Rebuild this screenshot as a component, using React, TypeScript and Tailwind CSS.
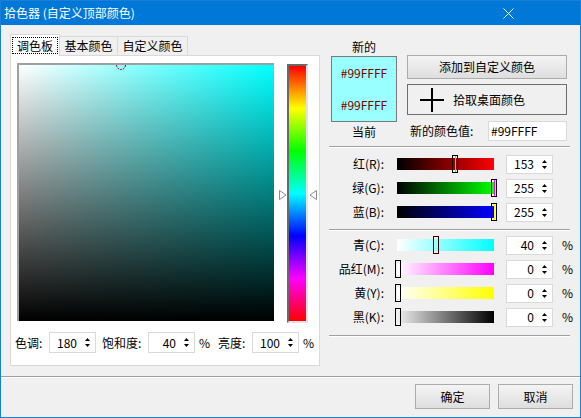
import React from "react";

const SpinArrows = () => (
  <svg width="5" height="9" viewBox="0 0 5 9" className="shrink-0">
    <path d="M2.5 0 L5 3 L0 3 Z" fill="#000" />
    <path d="M0 6 L5 6 L2.5 9 Z" fill="#000" />
  </svg>
);

function Spin({ value, className }: { value: string; className: string }) {
  return (
    <div className={"flex items-center justify-end bg-white border border-[#d9d9d9] pr-[5px] shrink-0 " + className}>
      <span className="mr-[8px] leading-none">{value}</span>
      <SpinArrows />
    </div>
  );
}

function Slider({
  track,
  pos,
  line,
  dark,
}: {
  track: string;
  pos: number;
  line?: string;
  dark?: boolean;
}) {
  return (
    <div className={"relative w-[97px] h-[12px] ml-[13px] shrink-0 " + track}>
      <div
        className={"absolute -top-[3px] h-[18px] w-[6px] border flex justify-center " + (dark ? "border-[#3a0000]" : "border-black")}
        style={{ left: Math.round(pos * 97) - 3 + (pos === 0 ? 1 : 0) }}
      >
        {line ? <div className={"w-[1px] h-full " + line} /> : null}
      </div>
    </div>
  );
}

function Row({
  label,
  track,
  pos,
  value,
  line,
  pct,
  dark,
}: {
  label: string;
  track: string;
  pos: number;
  value: string;
  line?: string;
  pct?: boolean;
  dark?: boolean;
}) {
  return (
    <div className="flex items-center h-[24px]">
      <div className="w-[59px] text-right shrink-0">{label}</div>
      <Slider track={track} pos={pos} line={line} dark={dark} />
      <Spin value={value} className="ml-[12px] w-[47px] h-[19px]" />
      {pct ? <span className="ml-[9px]">%</span> : null}
    </div>
  );
}

const Sep = () => <div className="ml-[4px] w-[241px] border-t border-[#a0a0a0] border-b border-b-white" />;

export default function App() {
  return (
    <div className="w-[581px] h-[418px] flex flex-col bg-[#f0f0f0] border border-[#1a7fd6] text-[12px] text-black font-['Microsoft_YaHei','Noto_Sans_CJK_SC',sans-serif] leading-[16px] overflow-hidden">
      {/* Title bar */}
      <div className="h-[24px] bg-[#0078d7] flex items-center justify-between pl-[3px] pr-[66px] shrink-0 -mt-[1px] pt-[1px] h-[25px]">
        <span className="text-white text-[12px]">拾色器 (自定义顶部颜色)</span>
        <svg width="11" height="11" viewBox="0 0 11 11">
          <path d="M0.5 0.5 L10.5 10.5 M10.5 0.5 L0.5 10.5" stroke="#fff" strokeWidth="1" />
        </svg>
      </div>

      {/* Main */}
      <div className="flex h-[351px] shrink-0">
        {/* Left column */}
        <div className="pl-[9px] pt-[9px] w-[319px] shrink-0">
          <div className="flex items-end h-[21px]">
            <div className="relative z-10 -mb-[1px] h-[22px] w-[50px] bg-white border border-b-0 border-[#d9d9d9] flex items-center justify-center">
              <span className="border border-dotted border-black px-[4px] leading-[15px]">调色板</span>
            </div>
            <div className="h-[19px] w-[58px] border-t border-r border-[#d9d9d9] flex items-center justify-center">基本颜色</div>
            <div className="h-[19px] w-[70px] border-t border-r border-[#d9d9d9] flex items-center justify-center">自定义颜色</div>
          </div>
          <div className="w-[310px] h-[311px] bg-white border border-[#d9d9d9] flex flex-col">
            <div className="flex items-start pl-[6px] pt-[7px]">
              <div className="relative w-[257px] h-[258px] border-t-2 border-l-2 border-[#a0a0a0] overflow-hidden bg-[linear-gradient(to_top,#000,rgba(0,0,0,0)),linear-gradient(to_right,#fff,#0ff)]">
                <svg className="absolute left-[96px] -top-[6px]" width="12" height="12" viewBox="0 0 12 12">
                  <circle cx="6" cy="6" r="4.5" fill="none" stroke="#7a0000" strokeWidth="1" strokeDasharray="2 1" />
                </svg>
              </div>
              <div className="relative ml-[13px] mt-[1px] w-[21px] h-[259px] border-l-2 border-t-2 border-[#696969] border-r-2 border-r-[#e3e3e3] border-b-2 border-b-[#e3e3e3] bg-[linear-gradient(to_bottom,#f00,#ff0,#0f0,#0ff,#00f,#f0f,#f00)] bg-clip-padding">
                <svg className="absolute -left-[10px] top-[124px]" width="8" height="10" viewBox="0 0 8 10">
                  <path d="M0.5 0.5 L7 5 L0.5 9.5 Z" fill="#fff" stroke="#8a8a8a" strokeWidth="1" />
                </svg>
                <svg className="absolute left-[20px] top-[124px]" width="8" height="10" viewBox="0 0 8 10">
                  <path d="M7.5 0.5 L1 5 L7.5 9.5 Z" fill="#fff" stroke="#8a8a8a" strokeWidth="1" />
                </svg>
              </div>
            </div>
            <div className="flex items-center pl-[4px] mt-[9px] h-[21px]">
              <div className="w-[34px] shrink-0">色调:</div>
              <Spin value="180" className="w-[47px] h-[21px]" />
              <div className="w-[52px] pl-[6px] shrink-0">饱和度:</div>
              <Spin value="40" className="w-[47px] h-[21px]" />
              <div className="w-[23px] pl-[4px] shrink-0">%</div>
              <div className="w-[34px] shrink-0">亮度:</div>
              <Spin value="100" className="w-[47px] h-[21px]" />
              <div className="pl-[4px]">%</div>
            </div>
          </div>
        </div>

        {/* Right column */}
        <div className="ml-[5px] pt-[12px] w-[255px] flex flex-col">
          <div className="flex">
            <div className="ml-[6px] w-[66px] flex flex-col">
              <div className="h-[19px] flex items-center justify-center">新的</div>
              <div className="h-[66px] bg-[#99ffff] border border-[#7a7a7a] flex flex-col justify-around items-center text-[#7a0000]">
                <span>#99FFFF</span>
                <span>#99FFFF</span>
              </div>
              <div className="h-[20px] flex items-center justify-center">当前</div>
            </div>
            <div className="ml-[10px] w-[160px] flex flex-col mt-[18px]">
              <div className="h-[24px] border border-[#acacac] bg-[linear-gradient(to_bottom,#f4f4f4,#dedede)] flex items-center justify-center">
                添加到自定义颜色
              </div>
              <div className="mt-[5px] h-[31px] border border-[#6d6d6d] bg-[#f0f0f0] flex items-center pl-[12px]">
                <svg width="24" height="24" viewBox="0 0 24 24" className="shrink-0">
                  <path d="M0 12 H24 M12 0 V24" stroke="#000" strokeWidth="2" />
                </svg>
                <span className="ml-[9px]">拾取桌面颜色</span>
              </div>
              <div className="mt-[6px] h-[19px] flex items-center">
                <span className="pl-[3px] w-[81px] shrink-0">新的颜色值:</span>
                <div className="w-[79px] h-[20px] bg-white border border-[#d9d9d9] flex items-center pl-[2px]">#99FFFF</div>
              </div>
            </div>
          </div>
          <div className="mt-[4px]">
            <Sep />
          </div>
          <div className="mt-[4px]">
            <Row label="红(R):" track="bg-[linear-gradient(to_right,#000,#f00)]" pos={0.6} value="153" line="bg-[#0ff]" />
            <Row label="绿(G):" track="bg-[linear-gradient(to_right,#000,#0f0)]" pos={1} value="255" line="bg-[#f0f]" />
            <Row label="蓝(B):" track="bg-[linear-gradient(to_right,#000,#00f)]" pos={1} value="255" line="bg-[#ff0]" />
          </div>
          <div className="mt-[5px]">
            <Sep />
          </div>
          <div className="mt-[2px]">
            <Row label="青(C):" track="bg-[linear-gradient(to_right,#fff,#0ff)]" pos={0.4} value="40" pct dark />
            <Row label="品红(M):" track="bg-[linear-gradient(to_right,#fff,#f0f)]" pos={0} value="0" pct />
            <Row label="黄(Y):" track="bg-[linear-gradient(to_right,#fff,#ff0)]" pos={0} value="0" pct />
            <Row label="黑(K):" track="bg-[linear-gradient(to_right,#f0f0f0,#000)]" pos={0} value="0" pct />
          </div>
          <div className="mt-[6px]">
            <Sep />
          </div>
        </div>
      </div>

      {/* Footer */}
      <div className="border-t border-[#a0a0a0] border-b border-b-white shrink-0" />
      <div className="flex justify-end gap-[8px] pr-[7px] pt-[6px]">
        <div className="w-[75px] h-[25px] border border-[#acacac] bg-[linear-gradient(to_bottom,#f4f4f4,#dedede)] flex items-center justify-center">确定</div>
        <div className="w-[75px] h-[25px] border border-[#acacac] bg-[linear-gradient(to_bottom,#f4f4f4,#dedede)] flex items-center justify-center">取消</div>
      </div>
    </div>
  );
}
